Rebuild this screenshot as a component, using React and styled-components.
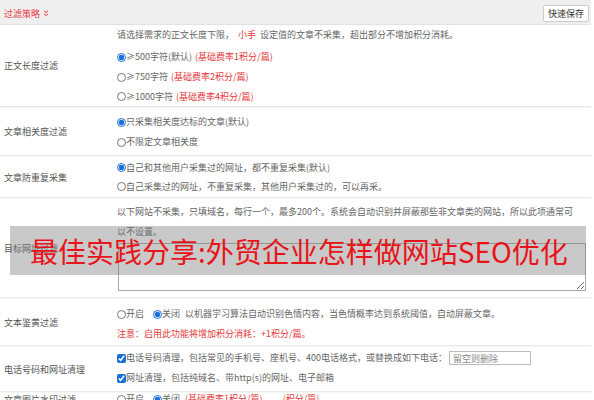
import React from "react";
import styled, { createGlobalStyle } from "styled-components";

const Global = createGlobalStyle`
  html, body { margin: 0; padding: 0; background: #fff; }
  body {
    font-family: "Noto Sans CJK SC", "Noto Sans", sans-serif;
    font-size: 9px;
    color: #555;
  }
`;

const Page = styled.div`
  position: relative;
  width: 591px;
  height: 400px;
  overflow: hidden;
`;

const Header = styled.div`
  height: 25px;
  background: #efefef;
  border-bottom: 1px solid #e2e2e2;
  display: flex;
  align-items: center;
  justify-content: space-between;
  padding: 0 2px 0 4px;
  box-sizing: border-box;
`;

const Title = styled.span`
  color: #e4393c;
  display: flex;
  align-items: center;
  gap: 3px;
  margin-top: 2px;
`;

const SaveBtn = styled.button`
  font-family: inherit;
  font-size: 9px;
  color: #333;
  background: #fff;
  border: 1px solid #ccc;
  border-radius: 2px;
  height: 17px;
  width: 46px;
  padding: 0;
  margin-top: 3px;
`;

const Row = styled.div`
  display: flex;
  border-bottom: 1px solid #e8e8e8;
  box-shadow: 0 1px 0 #f6f6f6;
  margin-bottom: 1px;
`;

const Label = styled.div`
  width: 117px;
  flex: none;
  padding-left: 4px;
  display: flex;
  align-items: center;
  box-sizing: border-box;
  color: #555;
`;

const Body = styled.div`
  flex: 1;
  padding: ${(p) => p.$pad || "3px 0"};
  display: flex;
  flex-direction: column;
`;

const Line = styled.div`
  height: ${(p) => p.$h || 20}px;
  line-height: ${(p) => p.$h || 20}px;
  display: flex;
  align-items: center;
  white-space: nowrap;
  color: ${(p) => (p.$red ? "#e4393c" : "#666")};
  margin-bottom: ${(p) => p.$mb || 0}px;
`;

const Red = styled.span`
  color: #e4393c;
  margin-left: ${(p) => p.$ml || 0}px;
  margin-right: ${(p) => p.$mr || 0}px;
`;

const Radio = styled.input.attrs({ type: "radio", readOnly: true })`
  width: 9px;
  height: 9px;
  margin: 0;
  accent-color: #1a6fd8;
`;

const Check = styled.input.attrs({ type: "checkbox", readOnly: true })`
  width: 9px;
  height: 9px;
  margin: 0;
  accent-color: #1a6fd8;
`;

const Opt = styled.label`
  display: inline-flex;
  align-items: center;
  margin-right: ${(p) => p.$mr || 0}px;
`;

const Area = styled.textarea`
  width: 468px;
  height: 48px;
  box-sizing: border-box;
  border: 1px solid #a9a9a9;
  margin: 1px 0 0 1px;
  resize: both;
`;

const SmallInput = styled.input`
  width: 82px;
  height: 14px;
  box-sizing: border-box;
  border: 1px solid #bbb;
  font-family: inherit;
  font-size: 9px;
  padding: 0 3px;
  margin-left: 2px;
  color: #888;
  &::placeholder { color: #888; }
`;

const Banner = styled.div`
  position: absolute;
  left: 10px;
  top: 226px;
  width: 576px;
  height: 49px;
  background: rgba(120, 120, 120, 0.4);
  display: flex;
  align-items: center;
  padding-left: 20px;
  box-sizing: border-box;
  font-size: 28px;
  color: #e8141a;
  white-space: nowrap;
`;

const Chevron = () => (
  <svg width="6" height="7" viewBox="0 0 6 7">
    <path d="M1 0.8 L3 2.6 L5 0.8 M1 3.8 L3 5.6 L5 3.8" stroke="#e4393c" strokeWidth="1" fill="none" />
  </svg>
);

export default function App() {
  return (
    <Page>
      <Global />
      <Header>
        <Title>过滤策略 <Chevron /></Title>
        <SaveBtn>快速保存</SaveBtn>
      </Header>

      <Row>
        <Label>正文长度过滤</Label>
        <Body $pad="2px 0 0">
          <Line $h={15} $mb={5}>
            请选择需求的正文长度下限，<Red $ml={4} $mr={4}>小手</Red>设定值的文章不采集，超出部分不增加积分消耗。
          </Line>
          <Line><Opt><Radio name="len" defaultChecked />≥500字符(默认)</Opt><Red $ml={3}>(基础费率1积分/篇)</Red></Line>
          <Line><Opt><Radio name="len" />≥750字符</Opt><Red $ml={3}>(基础费率2积分/篇)</Red></Line>
          <Line $h={19}><Opt><Radio name="len" />≥1000字符</Opt><Red $ml={3}>(基础费率4积分/篇)</Red></Line>
        </Body>
      </Row>

      <Row>
        <Label>文章相关度过滤</Label>
        <Body $pad="4px 0 3px">
          <Line><Opt><Radio name="rel" defaultChecked />只采集相关度达标的文章(默认)</Opt></Line>
          <Line><Opt><Radio name="rel" />不限定文章相关度</Opt></Line>
        </Body>
      </Row>

      <Row>
        <Label>文章防重复采集</Label>
        <Body $pad="1px 0 1px">
          <Line $h={19}><Opt><Radio name="dup" defaultChecked />自己和其他用户采集过的网址，都不重复采集(默认)</Opt></Line>
          <Line $h={19}><Opt><Radio name="dup" />自己采集过的网址，不重复采集，其他用户采集过的，可以再采。</Opt></Line>
        </Body>
      </Row>

      <Row>
        <Label>目标网址过滤</Label>
        <Body $pad="3px 0 6px">
          <Line>以下网站不采集，只填域名，每行一个，最多200个。系统会自动识别并屏蔽那些非文章类的网站，所以此项通常可</Line>
          <Line>以不设置。</Line>
          <Area />
        </Body>
      </Row>

      <Row>
        <Label>文本鉴黄过滤</Label>
        <Body $pad="5px 0 1px">
          <Line>
            <Opt $mr={9}><Radio name="porn" />开启</Opt>
            <Opt $mr={5}><Radio name="porn" defaultChecked />关闭</Opt>
            以机器学习算法自动识别色情内容，当色情概率达到系统阈值，自动屏蔽文章。
          </Line>
          <Line $red>注意：启用此功能将增加积分消耗：+1积分/篇。</Line>
        </Body>
      </Row>

      <Row>
        <Label>电话号码和网址清理</Label>
        <Body $pad="1px 0 3px">
          <Line>
            <Opt><Check defaultChecked />电话号码清理，包括常见的手机号、座机号、400电话格式，或替换成如下电话：</Opt>
            <SmallInput placeholder="留空则删除" />
          </Line>
          <Line><Opt><Check defaultChecked />网址清理，包括纯域名、带http(s)的网址、电子邮箱</Opt></Line>
        </Body>
      </Row>

      <Row>
        <Label>文章图片水印过滤</Label>
        <Body $pad="0">
          <Line $h={12}>
            <Opt $mr={9}><Radio name="wm" />开启</Opt>
            <Opt $mr={5}><Radio name="wm" defaultChecked />关闭</Opt>
            <Red>(基础费率1积分/篇)</Red><Red $ml={20}>(积分/篇)</Red>
          </Line>
        </Body>
      </Row>

      <Banner>最佳实践分享:外贸企业怎样做网站SEO优化</Banner>
    </Page>
  );
}
